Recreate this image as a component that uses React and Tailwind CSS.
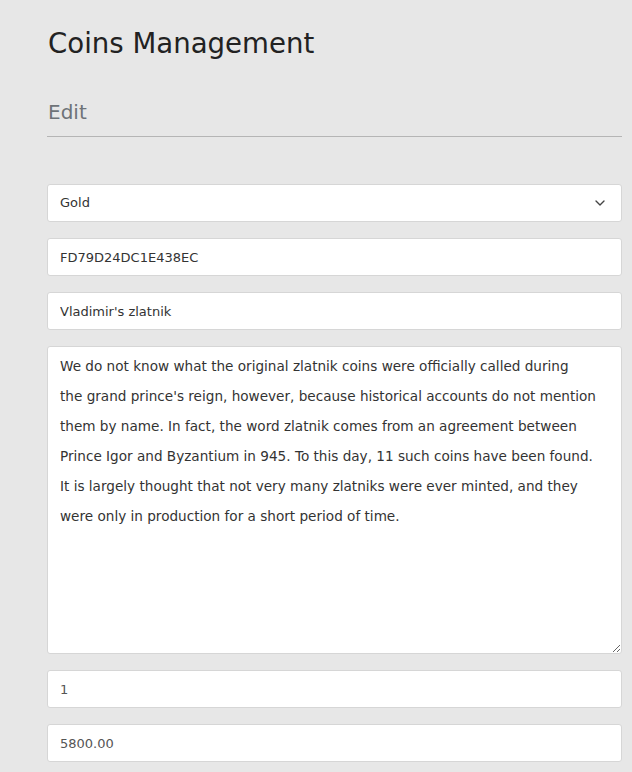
import React, { useState } from 'react';
import { ChevronDown } from 'lucide-react';

// line breaks follow the original form's wrapping
const description = [
  'We do not know what the original zlatnik coins were officially called during',
  "the grand prince's reign, however, because historical accounts do not mention",
  'them by name. In fact, the word zlatnik comes from an agreement between',
  'Prince Igor and Byzantium in 945. To this day, 11 such coins have been found.',
  'It is largely thought that not very many zlatniks were ever minted, and they',
  'were only in production for a short period of time.',
].join('\n');

const fieldClass =
  'block w-full h-[38px] rounded-[3px] border border-[#d6d6d6] bg-white px-3 text-[13px] text-[#333] outline-none';

function App() {
  const [metal, setMetal] = useState('Gold');
  const [code, setCode] = useState('FD79D24DC1E438EC');
  const [name, setName] = useState("Vladimir's zlatnik");
  const [text, setText] = useState(description);
  const [qty, setQty] = useState('1');
  const [price, setPrice] = useState('5800.00');

  return (
    <div
      className="min-h-screen bg-[#e7e7e7] pl-[47px] pr-[10px] pt-[26px]"
      style={{ fontFamily: '"DejaVu Sans", Verdana, sans-serif' }}
    >
      <h1 className="text-[27.6px] leading-[36px] text-[#222] ml-px">Coins Management</h1>
      <h2 className="mt-[36px] text-[20px] leading-[28px] text-[#6e7378] ml-px">Edit</h2>
      <hr className="mt-[10px] border-0 border-t border-[#b5b5b5]" />

      <form className="mt-[47px] flex flex-col gap-4">
        <div className="relative">
          <select
            value={metal}
            onChange={(e) => setMetal(e.target.value)}
            className={fieldClass + ' appearance-none'}
          >
            <option>Gold</option>
            <option>Silver</option>
            <option>Copper</option>
          </select>
          <ChevronDown
            size={16}
            strokeWidth={2}
            className="absolute right-[14px] top-[11px] text-[#444] pointer-events-none"
          />
        </div>
        <input className={fieldClass} value={code} onChange={(e) => setCode(e.target.value)} />
        <input className={fieldClass} value={name} onChange={(e) => setName(e.target.value)} />
        <textarea
          className="block w-full h-[308px] rounded-[3px] border border-[#d6d6d6] bg-white px-3 py-[4px] text-[13.6px] leading-[30px] text-[#333] outline-none"
          value={text}
          onChange={(e) => setText(e.target.value)}
        />
        <input className={fieldClass + ' text-[#555]'} value={qty} onChange={(e) => setQty(e.target.value)} />
        <input className={fieldClass + ' text-[#555]'} value={price} onChange={(e) => setPrice(e.target.value)} />
      </form>
    </div>
  );
}

export default App;
